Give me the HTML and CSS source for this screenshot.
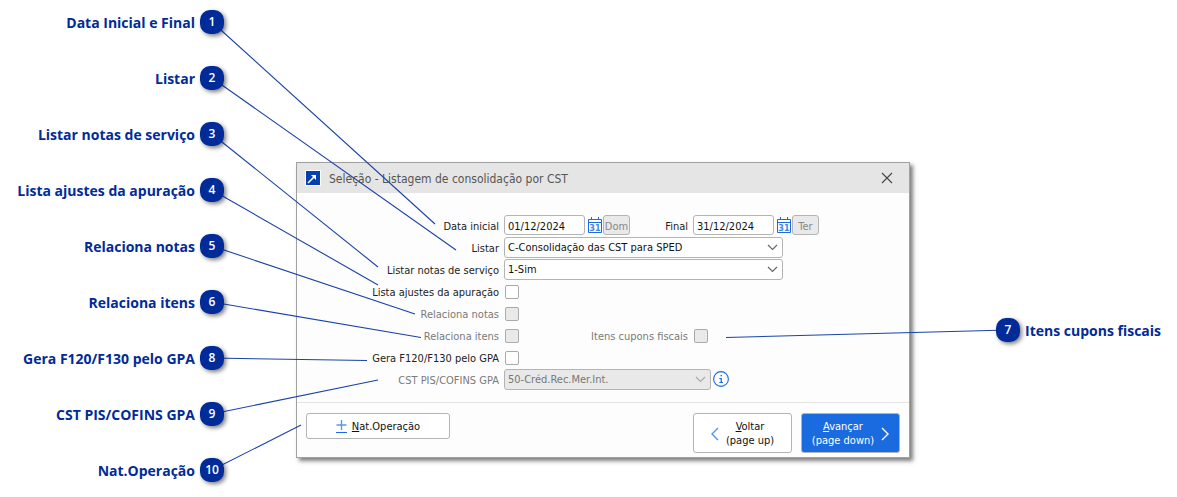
FILE: index.html
```html
<!DOCTYPE html>
<html lang="pt-BR">

<head>
    <meta charset="UTF-8">
    <meta name="viewport" content="width=device-width, initial-scale=1.0">
    <title>Listagem de consolidação por CST</title>
    <link rel="stylesheet" href="styles.css">
</head>

<body>
    <div class="main">

        <ol class="notes">
            <li>Data Inicial e Final <span class="num">1</span></li>
            <li>Listar <span class="num">2</span></li>
            <li>Listar notas de serviço <span class="num">3</span></li>
            <li>Lista ajustes da apuração <span class="num">4</span></li>
            <li>Relaciona notas <span class="num">5</span></li>
            <li>Relaciona itens <span class="num">6</span></li>
            <li>Gera F120/F130 pelo GPA <span class="num">8</span></li>
            <li>CST PIS/COFINS GPA <span class="num">9</span></li>
            <li>Nat.Operação <span class="num">10</span></li>
        </ol>

        <form class="window">
            <div class="titlebar">
                <svg class="logo" width="16" height="16" viewBox="0 0 16 16">
                    <rect width="16" height="16" fill="#fff" />
                    <rect x="1" y="1" width="14" height="14" fill="#0540ad" />
                    <path d="M3 13L5 11M5 11L10 6" fill="none" stroke="#fff" stroke-width="1.5" />
                    <path d="M6 5H11V10Z" fill="#fff" />
                </svg>
                <h1>Seleção - Listagem de consolidação por CST</h1>
                <button type="button" class="close" aria-label="Fechar">
                    <svg width="12" height="12" viewBox="0 0 12 12">
                        <path d="M1 1L11 11M11 1L1 11" fill="none" stroke="#444" stroke-width="1.1" />
                    </svg>
                </button>
            </div>

            <div class="fields">
                <div class="row">
                    <label class="first" for="inicial">Data inicial</label>
                    <div class="half">
                        <div class="date">
                            <input type="text" id="inicial" value="01/12/2024">
                            <button type="button" class="cal" aria-label="Calendário">
                                <svg width="15" height="17" viewBox="0 0 15 17">
                                    <path d="M0.5 2.5H13.5V15.5H0.5ZM0.5 5.5H13.5M3.5 0V3M10.5 0V3" fill="none" stroke="#1b6be0" />
                                    <text x="7" y="14">31</text>
                                </svg>
                            </button>
                            <button type="button" class="day" disabled>Dom</button>
                        </div>
                        <label for="final">Final</label>
                    </div>
                    <div class="date">
                        <input type="text" id="final" value="31/12/2024">
                        <button type="button" class="cal" aria-label="Calendário">
                            <svg width="15" height="17" viewBox="0 0 15 17">
                                <path d="M0.5 2.5H13.5V15.5H0.5ZM0.5 5.5H13.5M3.5 0V3M10.5 0V3" fill="none" stroke="#1b6be0" />
                                <text x="7" y="14">31</text>
                            </svg>
                        </button>
                        <button type="button" class="day" disabled>Ter</button>
                    </div>
                </div>

                <div class="row">
                    <label class="first" for="listar">Listar</label>
                    <div class="combo">
                        <select id="listar">
                            <option>C-Consolidação das CST para SPED</option>
                        </select>
                        <svg width="11" height="7" viewBox="0 0 11 7"><path d="M1 1L5.5 5.5L10 1" /></svg>
                    </div>
                </div>

                <div class="row">
                    <label class="first" for="servico">Listar notas de serviço</label>
                    <div class="combo">
                        <select id="servico">
                            <option>1-Sim</option>
                        </select>
                        <svg width="11" height="7" viewBox="0 0 11 7"><path d="M1 1L5.5 5.5L10 1" /></svg>
                    </div>
                </div>

                <div class="row">
                    <label class="first" for="ajustes">Lista ajustes da apuração</label>
                    <input type="checkbox" id="ajustes">
                </div>

                <div class="row off">
                    <label class="first" for="notas">Relaciona notas</label>
                    <input type="checkbox" id="notas" disabled>
                </div>

                <div class="row off">
                    <label class="first" for="itens">Relaciona itens</label>
                    <div class="half">
                        <input type="checkbox" id="itens" disabled>
                        <label for="cupons">Itens cupons fiscais</label>
                    </div>
                    <input type="checkbox" id="cupons" disabled>
                </div>

                <div class="row">
                    <label class="first" for="gera">Gera F120/F130 pelo GPA</label>
                    <input type="checkbox" id="gera">
                </div>

                <div class="row off">
                    <label class="first" for="cst">CST PIS/COFINS GPA</label>
                    <div class="combo small">
                        <select id="cst" disabled>
                            <option>50-Créd.Rec.Mer.Int.</option>
                        </select>
                        <svg width="11" height="7" viewBox="0 0 11 7"><path d="M1 1L5.5 5.5L10 1" /></svg>
                    </div>
                    <svg class="info" width="16" height="16" viewBox="0 0 16 16">
                        <circle cx="8" cy="8" r="7.4" fill="none" stroke="#1b6be0" stroke-width="1.1" />
                        <path d="M7.5 4H9V5.3H7.5ZM6.3 7H8.9V11H10V12H6.3V11H7.6V8H6.3Z" fill="#1b6be0" />
                    </svg>
                </div>
            </div>

            <div class="footer">
                <button type="button" class="nat">
                    <svg width="11" height="15" viewBox="0 0 11 15">
                        <path d="M5.5 1V11M0.5 6H10.5" fill="none" stroke="#5b97ea" stroke-width="1.4" />
                        <path d="M0 13.5H11" stroke="#1b6be0" />
                    </svg>
                    <span><u>N</u>at.Operação</span>
                </button>
                <button type="button" class="nav">
                    <svg width="8" height="14" viewBox="0 0 8 14"><path d="M7 1L1 7L7 13" /></svg>
                    <span><u>V</u>oltar<br>(page up)</span>
                </button>
                <button type="button" class="nav next">
                    <span><u>A</u>vançar<br>(page down)</span>
                    <svg width="8" height="14" viewBox="0 0 8 14"><path d="M1 1L7 7L1 13" /></svg>
                </button>
            </div>
        </form>

        <div class="side">
            <span class="num">7</span> Itens cupons fiscais
        </div>

        <!-- lines from each number to its field -->
        <svg class="lines" width="1177" height="497" viewBox="0 0 1177 497">
            <path d="M212 22L435 224" />
            <path d="M212 78L456 250" />
            <path d="M212 134L378 267" />
            <path d="M212 190L378 285" />
            <path d="M212 246L415 314" />
            <path d="M212 302L421 337.5" />
            <path d="M212 358L367 360.5" />
            <path d="M212 414L378 380" />
            <path d="M212 470L301 425" />
            <path d="M1008 330L726 337.5" />
        </svg>
    </div>
</body>

</html>
```
FILE: styles.css
```css
* {
    margin: 0;
    padding: 0;
    box-sizing: border-box;
}

body {
    background-color: white;
}

.main {
    display: flex;
    align-items: flex-start;
    position: relative;
    padding: 10px 0 15px;
    font-family: "Open Sans", sans-serif;
    font-size: 14px;
    font-weight: bold;
    color: #002b98;
}

.notes {
    width: 224px;
    margin-right: 72px;
    list-style: none;
    display: flex;
    flex-direction: column;
    gap: 32px;
}

.notes li {
    display: flex;
    justify-content: flex-end;
    align-items: center;
    gap: 5px;
    height: 24px;
    white-space: nowrap;
}

.num {
    width: 24px;
    height: 24px;
    flex-shrink: 0;
    border-radius: 10px;
    background-color: #002b98;
    box-shadow: 2px 2px 4px rgba(0, 0, 0, 0.5);
    color: white;
    font-size: 12px;
    font-weight: 600;
    line-height: 24px;
    text-align: center;
    position: relative;
    z-index: 2;
}

.side {
    display: flex;
    align-items: center;
    gap: 5px;
    width: 181px;
    height: 24px;
    margin-top: 308px;
    margin-left: 86px;
    white-space: nowrap;
}

.lines {
    position: absolute;
    top: 0;
    left: 0;
    pointer-events: none;
}

.lines path {
    stroke: #1a43a8;
    stroke-width: 1.1;
}

/* window */

.window {
    flex: 1;
    min-width: 614px;
    margin-top: 152px;
    border: 1px solid #a0a0a0;
    background-color: #fdfdfd;
    box-shadow: 3px 3px 4px rgba(0, 0, 0, 0.5);
    font-family: "DejaVu Sans Condensed", "DejaVu Sans", sans-serif;
    font-size: 11px;
    font-weight: normal;
    color: #222;
}

.titlebar {
    display: flex;
    align-items: center;
    height: 30px;
    padding: 0 16px 0 8px;
    background-color: #e5e5e5;
}

.titlebar h1 {
    flex: 1;
    margin-left: 8px;
    padding-top: 2px;
    font-size: 12px;
    font-weight: normal;
    color: #555;
}

.close {
    width: 12px;
    height: 12px;
    border: none;
    background: none;
}

.close svg,
.cal svg {
    display: block;
}

.fields {
    padding: 21px 0 12px;
}

.row {
    display: flex;
    align-items: center;
    gap: 5px;
    height: 22px;
    white-space: nowrap;
}

label {
    padding-top: 2px;
}

.first {
    width: 202px;
    text-align: right;
}

.off {
    color: #7a7a7a;
}

.half {
    width: 184px;
    display: flex;
    justify-content: space-between;
    align-items: center;
}

.date {
    display: flex;
    align-items: center;
}

input,
select,
button {
    font-family: inherit;
    font-size: 11px;
    color: #111;
    border: 1px solid #b4b4b4;
    border-radius: 3px;
    background-color: white;
}

.date input {
    width: 81px;
    height: 20px;
    padding: 2px 0 0 3px;
}

.date .cal {
    width: 15px;
    height: 17px;
    margin-left: 3px;
    border: none;
    background: none;
}

.cal text {
    font-family: "DejaVu Sans Condensed", "DejaVu Sans", sans-serif;
    font-size: 9px;
    font-weight: bold;
    fill: #4485e6;
    text-anchor: middle;
}

.day {
    width: 27px;
    height: 20px;
    padding-top: 2px;
    background-color: #e9e9e9;
    color: #888;
}

.combo {
    position: relative;
    width: 279px;
    height: 21px;
}

.small {
    width: 207px;
}

.combo select {
    display: block;
    width: 100%;
    height: 21px;
    padding: 1px 0 0 3px;
    appearance: none;
}

.combo svg {
    position: absolute;
    top: 7px;
    right: 5px;
    pointer-events: none;
}

.combo path {
    fill: none;
    stroke: #666;
    stroke-width: 1.2;
}

.off select,
.off input {
    background-color: #e9e9e9;
    color: #777;
    opacity: 1;
}

.off .combo path {
    stroke: #aaa;
}

.info {
    margin-left: -3px;
}

input[type="checkbox"] {
    width: 14px;
    height: 14px;
    margin: 2px 0 0 1px;
    border-color: #aaa;
    border-radius: 2px;
    appearance: none;
}

/* buttons */

.footer {
    display: flex;
    align-items: flex-start;
    gap: 9px;
    padding: 10px 9px 4px;
    border-top: 1px solid #e4e4e4;
}

.footer button {
    display: flex;
    justify-content: center;
    align-items: center;
    gap: 7px;
    padding-top: 1px;
    line-height: 14px;
}

.footer .nat {
    width: 144px;
    height: 26px;
    gap: 5px;
    margin-right: auto;
}

.nav {
    width: 99px;
    height: 40px;
}

.nav path {
    fill: none;
    stroke: #5593ea;
    stroke-width: 1.4;
}

.footer .next {
    background-color: #1b6be0;
    color: white;
}

.next path {
    stroke: white;
}
```
